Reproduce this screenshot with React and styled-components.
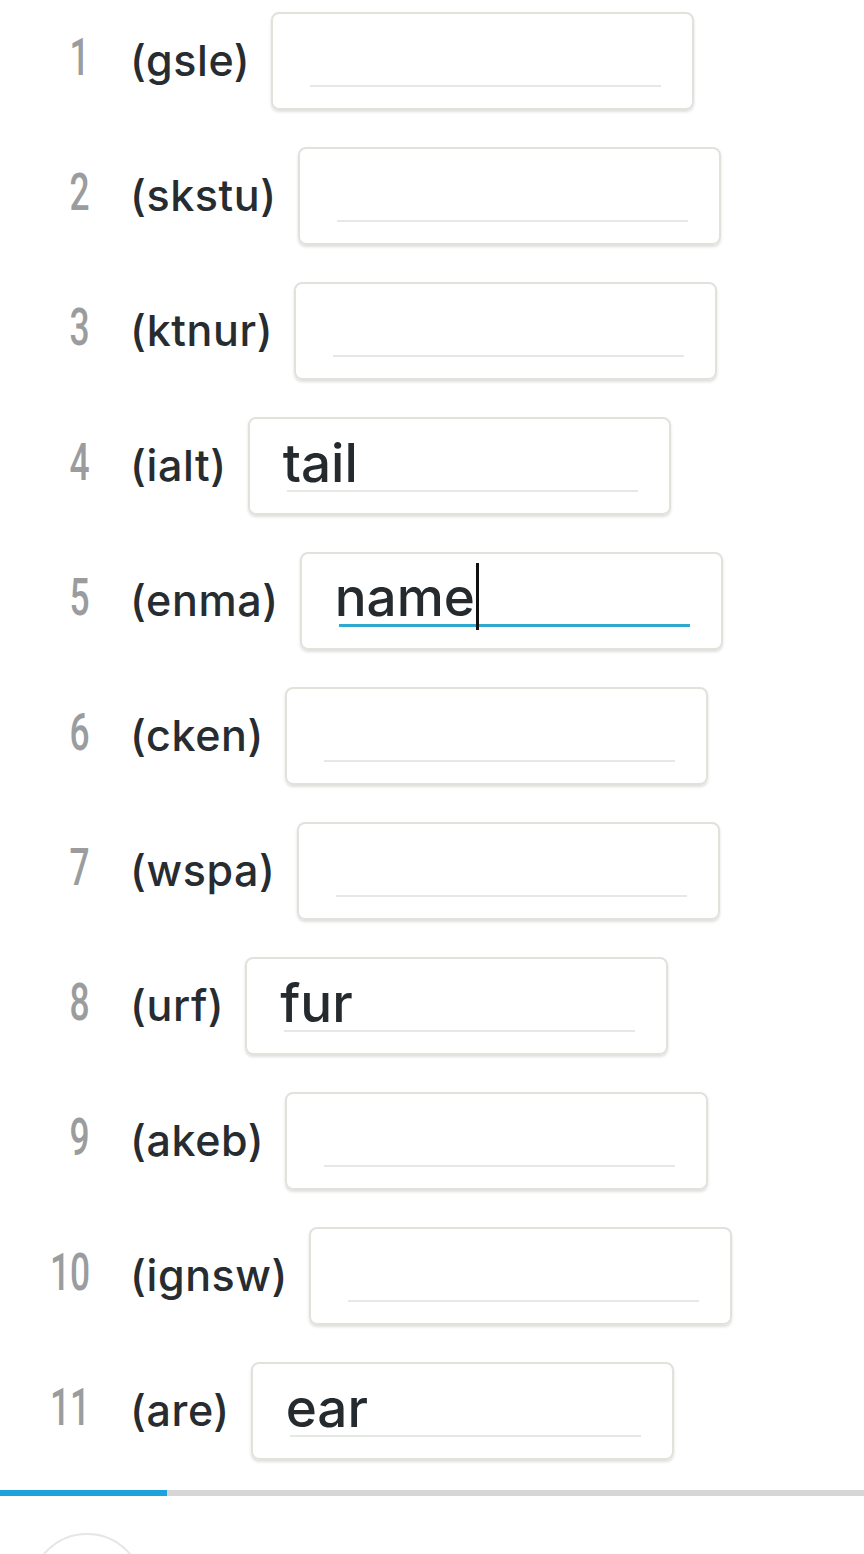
import styled, { createGlobalStyle } from 'styled-components';

const GlobalStyle = createGlobalStyle`
  html, body {
    margin: 0;
    padding: 0;
    background: #ffffff;
  }
  body {
    font-family: Inter, "Open Sans", sans-serif;
    overflow: hidden;
  }
`;

const words = [
  { scrambled: 'gsle', answer: '' },
  { scrambled: 'skstu', answer: '' },
  { scrambled: 'ktnur', answer: '' },
  { scrambled: 'ialt', answer: 'tail' },
  { scrambled: 'enma', answer: 'name', active: true },
  { scrambled: 'cken', answer: '' },
  { scrambled: 'wspa', answer: '' },
  { scrambled: 'urf', answer: 'fur' },
  { scrambled: 'akeb', answer: '' },
  { scrambled: 'ignsw', answer: '' },
  { scrambled: 'are', answer: 'ear' },
];

const App = () => {
  return (
    <Page>
      <GlobalStyle />
      <List>
        {words.map((w, i) => (
          <Row key={i}>
            <Num>
              <NumText>{i + 1}</NumText>
            </Num>
            <Label>({w.scrambled})</Label>
            <Field>
              <Entry $active={w.active}>
                {w.answer}
                {w.active && <Caret />}
              </Entry>
            </Field>
          </Row>
        ))}
      </List>
      <Progress>
        <ProgressFill />
      </Progress>
      <Footer>
        <RoundButton />
      </Footer>
    </Page>
  );
};

export default App;

const Page = styled.div`
  width: 864px;
  height: 1554px;
  overflow: hidden;
`;

const List = styled.div`
  display: flex;
  flex-direction: column;
  gap: 37px;
  padding-top: 12px;
`;

const Row = styled.div`
  display: flex;
  align-items: center;
  height: 98px;
`;

const Num = styled.div`
  width: 90px;
  flex-shrink: 0;
  display: flex;
  justify-content: flex-end;
  margin-right: 40px;
  margin-top: -6px;
`;

const NumText = styled.span`
  display: inline-block;
  font-family: Roboto, "Liberation Sans", sans-serif;
  font-size: 52px;
  font-weight: 500;
  line-height: 1;
  color: #9a9c9d;
  transform: scaleX(0.68);
  transform-origin: right center;
`;

const Label = styled.div`
  font-size: 43px;
  font-weight: 500;
  letter-spacing: 0.6px;
  color: #272c30;
  line-height: 1;
  margin-top: -2px;
  margin-right: 21px;
  white-space: nowrap;
`;

const Field = styled.div`
  box-sizing: border-box;
  width: 423px;
  height: 98px;
  border: 2px solid #e0e3dc;
  border-radius: 8px;
  box-shadow: 0 2px 3px rgba(0, 0, 0, 0.13);
  padding: 0 31px 21px 37px;
  display: flex;
  align-items: flex-end;
`;

const Entry = styled.div`
  flex: 1;
  height: 66px;
  display: flex;
  align-items: flex-end;
  border-bottom: ${(p) => (p.$active ? '3px solid #2fa9cf' : '2px solid #e6e8e6')};
  text-indent: -4px;
  font-size: 53px;
  font-weight: 500;
  line-height: 1;
  color: #252a2e;
`;

const Caret = styled.span`
  display: inline-block;
  width: 3px;
  height: 67px;
  background: #111;
  margin-left: 1px;
  margin-bottom: -6px;
`;

const Progress = styled.div`
  margin-top: 30px;
  height: 6px;
  background: #d6d6d6;
`;

const ProgressFill = styled.div`
  width: 167px;
  height: 100%;
  background: #1ea2dc;
`;

const Footer = styled.div`
  padding: 37px 0 0 30px;
`;

const RoundButton = styled.div`
  width: 110px;
  height: 110px;
  border-radius: 50%;
  border: 2px solid #e6e6e6;
`;
